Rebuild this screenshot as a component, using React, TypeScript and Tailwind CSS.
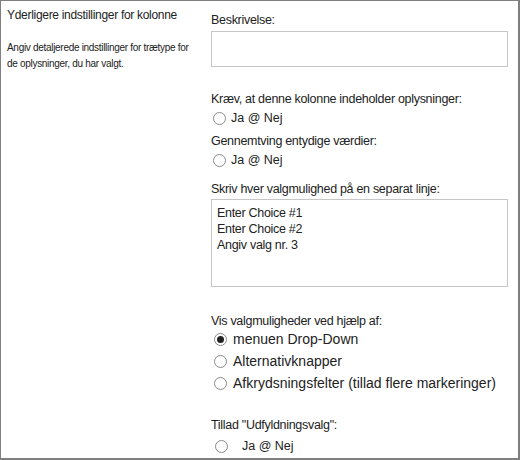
import React from "react";

function Radio({ checked = false }: { checked?: boolean }) {
  return (
    <span className="inline-flex h-[13px] w-[13px] shrink-0 items-center justify-center rounded-full border border-[#8a8a8a] bg-white">
      {checked && <span className="h-[7px] w-[7px] rounded-full bg-[#222]" />}
    </span>
  );
}

export default function App() {
  return (
    <div
      className="flex h-[460px] w-[520px] border-t border-l border-b-2 border-r-2 border-[#7f7f7f] bg-white text-[#222]"
      style={{ fontFamily: '"Liberation Sans", Arial, sans-serif' }}
    >
      <div className="w-[210px] shrink-0 pl-[6px] pt-[6px]">
        <div className="text-[12px] leading-[16px] tracking-[-0.3px]">Yderligere indstillinger for kolonne</div>
        <div className="mt-[17px] whitespace-nowrap text-[10px] leading-[16px] tracking-[-0.3px]">
          Angiv detaljerede indstillinger for trætype for
          <br />
          de oplysninger, du har valgt.
        </div>
      </div>
      <div className="flex-1 pr-[10px] pt-[11px] text-[12.5px]">
        <div className="leading-[16px] tracking-[-0.3px]">Beskrivelse:</div>
        <div className="mt-[3px] h-[36px] border border-[#c6c6c6]" />

        <div className="mt-[24px] leading-[16px] tracking-[-0.3px]">Kræv, at denne kolonne indeholder oplysninger:</div>
        <div className="mt-[3px] flex items-center gap-[5px] pl-[2px] leading-[16px]">
          <Radio />
          <span>Ja @ Nej</span>
        </div>

        <div className="mt-[7px] leading-[16px] tracking-[-0.3px]">Gennemtving entydige værdier:</div>
        <div className="mt-[3px] flex items-center gap-[5px] pl-[2px] leading-[16px]">
          <Radio />
          <span>Ja @ Nej</span>
        </div>

        <div className="mt-[13px] leading-[16px] tracking-[-0.3px]">Skriv hver valgmulighed på en separat linje:</div>
        <div className="mt-[2px] h-[88px] border border-[#c6c6c6] px-[5px] pt-[5px] leading-[16px] tracking-[-0.3px]">
          <div>Enter Choice #1</div>
          <div>Enter Choice #2</div>
          <div>Angiv valg nr. 3</div>
        </div>

        <div className="mt-[26px] leading-[16px] tracking-[-0.3px]">Vis valgmuligheder ved hjælp af:</div>
        <div className="mt-[2px] flex flex-col gap-[5px] pl-[3px] text-[14px] leading-[17px]">
          <div className="flex items-center gap-[6px]">
            <Radio checked />
            <span>menuen Drop-Down</span>
          </div>
          <div className="flex items-center gap-[6px]">
            <Radio />
            <span>Alternativknapper</span>
          </div>
          <div className="flex items-center gap-[6px]">
            <Radio />
            <span>Afkrydsningsfelter (tillad flere markeringer)</span>
          </div>
        </div>

        <div className="mt-[25px] leading-[16px] tracking-[-0.3px]">Tillad "Udfyldningsvalg":</div>
        <div className="mt-[5px] flex items-center gap-[14px] pl-[4px] leading-[16px]">
          <Radio />
          <span>Ja @ Nej</span>
        </div>
      </div>
    </div>
  );
}
